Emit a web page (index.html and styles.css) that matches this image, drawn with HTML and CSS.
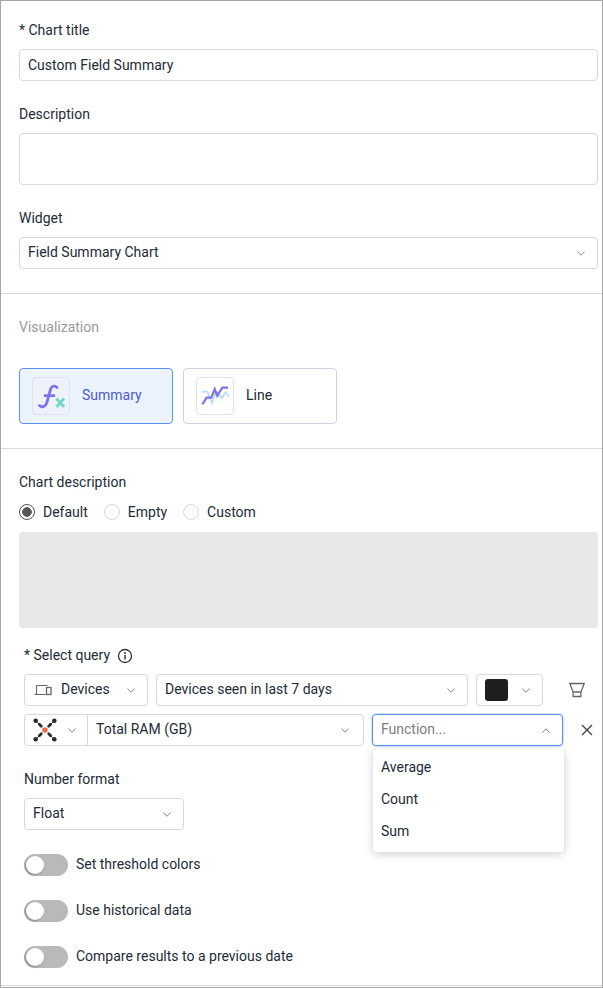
FILE: index.html
```html
<!DOCTYPE html>
<html lang="en">
<head>
    <meta charset="UTF-8">
    <meta name="viewport" content="width=device-width, initial-scale=1.0">
    <title>Chart settings</title>
    <link rel="stylesheet" href="styles.css">
</head>
<body>
    <div class="panel">
        <section class="section section-top">
            <div class="field-label">* Chart title</div>
            <div class="input">Custom Field Summary</div>
            <div class="field-label label-desc">Description</div>
            <div class="input textarea"></div>
            <div class="field-label label-widget">Widget</div>
            <div class="input select">
                <span>Field Summary Chart</span>
                <svg class="chev" viewBox="0 0 8 5"><path d="M.5.5 4 4.300 7.500.5"/></svg>
            </div>
        </section>

        <section class="section section-viz">
            <div class="viz-title">Visualization</div>
            <div class="viz-cards">
                <div class="viz-card active">
                    <div class="viz-icon">
                        <svg viewBox="0 0 36 36" width="36" height="36">
                            <path d="M24 9.500C22 7.500 18.500 7.500 17.500 11.500L14 24C13 28.500 9 30 6.500 27.500M12 17.700h9" fill="none" stroke="#8072ea" stroke-width="2.800" stroke-linecap="round"/>
                            <path d="M23.500 20.500l7.500 8.500M31 20.500l-7.500 8.500" fill="none" stroke="#74d6c6" stroke-width="2.800"/>
                        </svg>
                    </div>
                    <span>Summary</span>
                </div>
                <div class="viz-card">
                    <div class="viz-icon">
                        <svg viewBox="0 0 36 36" width="36" height="36">
                            <path d="M4.500 13.700h6L15 25l4-11 6 6 3.700-6 3.300 4.700" fill="none" stroke="#b9defb" stroke-width="1.800"/>
                            <path d="M5.300 26.300l4.400-6.600h4.600L17.700 11l2.600 6.700 5-8H31" fill="none" stroke="#8072ea" stroke-width="2.200"/>
                        </svg>
                    </div>
                    <span>Line</span>
                </div>
            </div>
        </section>

        <section class="section section-desc">
            <div class="field-label">Chart description</div>
            <div class="radios">
                <label class="radio"><i class="dot on"></i>Default</label>
                <label class="radio"><i class="dot"></i>Empty</label>
                <label class="radio"><i class="dot"></i>Custom</label>
            </div>
            <div class="desc-box"></div>

            <div class="query">
                <div class="query-label">
                    * Select query
                    <svg viewBox="0 0 16 16" width="16" height="16" class="info">
                        <circle cx="8" cy="8" r="6.500" fill="none" stroke="#333" stroke-width="1.300"/>
                        <path d="M8 7v4.500" stroke="#333" stroke-width="1.500"/>
                        <circle cx="8" cy="4.900" r="1" fill="#333"/>
                    </svg>
                </div>

                <div class="query-row">
                    <div class="input select w-devices">
                        <svg class="device" viewBox="0 0 18 12" width="18" height="12">
                            <path d="M2.500 10V1.500h11M.5 10.500h11" fill="none" stroke="#666" stroke-width="1.100"/>
                            <rect x="12.500" y="3.500" width="4.500" height="7" fill="none" stroke="#666" stroke-width="1.300"/>
                        </svg>
                        <span class="grow">Devices</span>
                        <svg class="chev" viewBox="0 0 8 5"><path d="M.5.5 4 4.300 7.500.5"/></svg>
                    </div>
                    <div class="input select w-seen">
                        <span>Devices seen in last 7 days</span>
                        <svg class="chev" viewBox="0 0 8 5"><path d="M.5.5 4 4.300 7.500.5"/></svg>
                    </div>
                    <div class="input select w-color">
                        <i class="swatch"></i>
                        <svg class="chev" viewBox="0 0 8 5"><path d="M.5.5 4 4.300 7.500.5"/></svg>
                    </div>
                    <svg class="row-btn filter" viewBox="0 0 16 16" width="16" height="16">
                        <path d="M.8 1.500h14.400L11.900 10v4.500H4.100V10zM4.100 10h7.800" fill="none" stroke="#666" stroke-width="1.300"/>
                    </svg>
                </div>

                <div class="query-row">
                    <div class="input field-combo">
                        <div class="combo-icon">
                            <svg viewBox="0 0 24 24" width="24" height="24">
                                <path d="M3 3l6 6M21 3l-6 6M3 21l6-6M21 21l-6-6" stroke="#444" stroke-width="1"/>
                                <path d="M6.300 6.300l2 2M17.700 6.300l-2 2M6.300 17.700l2-2M17.700 17.700l-2-2" stroke="#2b2b2b" stroke-width="2.800" stroke-linecap="round"/>
                                <g fill="#2b2b2b">
                                    <circle cx="2.700" cy="2.700" r="2.300"/><circle cx="21.300" cy="2.700" r="2.300"/>
                                    <circle cx="2.700" cy="21.300" r="2.300"/><circle cx="21.300" cy="21.300" r="2.300"/>
                                </g>
                                <circle cx="12" cy="12" r="3.200" fill="#fff"/>
                                <circle cx="12" cy="12" r="2.700" fill="#f0683f"/>
                            </svg>
                            <svg class="chev" viewBox="0 0 8 5"><path d="M.5.5 4 4.300 7.500.5"/></svg>
                        </div>
                        <div class="combo-value">
                            <span>Total RAM (GB)</span>
                            <svg class="chev" viewBox="0 0 8 5"><path d="M.5.5 4 4.300 7.500.5"/></svg>
                        </div>
                    </div>
                    <div class="func">
                        <div class="input select focused">
                            <span class="placeholder">Function...</span>
                            <svg class="chev" viewBox="0 0 8 5"><path d="M.5 4.500 4 .7l3.500 3.800"/></svg>
                        </div>
                        <ul class="menu">
                            <li>Average</li>
                            <li>Count</li>
                            <li>Sum</li>
                        </ul>
                    </div>
                    <svg class="row-btn close" viewBox="0 0 12 12" width="12" height="12">
                        <path d="M1 1l10 10M11 1 1 11" stroke="#444" stroke-width="1.400"/>
                    </svg>
                </div>

                <div class="field-label label-number">Number format</div>
                <div class="input select w-float">
                    <span>Float</span>
                    <svg class="chev" viewBox="0 0 8 5"><path d="M.5.5 4 4.300 7.500.5"/></svg>
                </div>

                <div class="toggles">
                    <div class="toggle-row"><i class="toggle"></i><span>Set threshold colors</span></div>
                    <div class="toggle-row"><i class="toggle"></i><span>Use historical data</span></div>
                    <div class="toggle-row"><i class="toggle"></i><span>Compare results to a previous date</span></div>
                </div>
            </div>
        </section>
    </div>
</body>
</html>
```

FILE: styles.css
```css
* {
    box-sizing: border-box;
}
body {
    margin: 0;
    font-family: Roboto, Arial, sans-serif;
    font-size: 14px;
    line-height: 20px;
    color: #222b38;
    background: #fff;
}
.panel {
    width: 603px;
    height: 988px;
    border: 1px solid #a6a6a6;
    overflow: hidden;
}
.section {
    padding-left: 18px;
    padding-right: 4px;
    border-bottom: 1px solid #d9d9d9;
}
.section-top {
    padding-top: 19px;
    height: 293px;
}
.section-viz {
    height: 155px;
    padding-top: 23px;
}
.section-desc {
    height: 537px;
    padding-top: 23px;
}
.field-label {
    height: 20px;
    margin-bottom: 9px;
}
.label-desc {
    margin-top: 23px;
}
.label-widget {
    margin-top: 23px;
}
.input {
    height: 32px;
    border: 1px solid #d9d9d9;
    border-radius: 4px;
    padding: 5px 8px;
    background: #fff;
}
.textarea {
    height: 52px;
}
.select {
    display: flex;
    align-items: center;
    justify-content: space-between;
}
.select > span,
.combo-value > span,
.viz-card > span,
.toggle-row > span {
    margin-top: -2px;
}
.chev {
    width: 8px;
    height: 5px;
    flex: none;
    margin-right: 4px;
    fill: none;
    stroke: #888;
    stroke-width: 1;
}
.viz-title {
    color: #9a9a9a;
    height: 20px;
}
.viz-cards {
    display: flex;
    gap: 10px;
    margin-top: 31px;
}
.viz-card {
    width: 154px;
    height: 56px;
    border: 1px solid #d0cfe3;
    border-radius: 4px;
    padding: 8px 12px;
    display: flex;
    align-items: center;
    gap: 12px;
}
.viz-card.active {
    background: #ebf3fe;
    border-color: #5b93f0;
    color: #4a5bd0;
}
.viz-icon {
    width: 38px;
    height: 38px;
    border: 1px solid #dfe3ee;
    border-radius: 4px;
    background: #fff;
}
.viz-card.active .viz-icon {
    background: #eef3fb;
}
.viz-icon svg {
    display: block;
}
.section-desc > .field-label {
    margin-bottom: 10px;
}
.radios {
    display: flex;
    gap: 16px;
    height: 20px;
}
.radio {
    display: flex;
    align-items: center;
    gap: 8px;
}
.dot {
    width: 16px;
    height: 16px;
    border: 1px solid #d9d9d9;
    border-radius: 50%;
    background: #fff;
}
.dot.on {
    border-color: #555;
    background: radial-gradient(circle, #555 0 4.500px, #fff 5px);
}
.desc-box {
    height: 96px;
    margin-top: 10px;
    background: #e8e8e8;
    border-radius: 4px;
}
.query {
    padding-left: 5px;
}
.query-label {
    display: flex;
    align-items: center;
    gap: 7px;
    margin-top: 17px;
    height: 20px;
}
.info {
    flex: none;
    margin-top: 2px;
}
.query-row {
    display: flex;
    gap: 8px;
    margin-top: 8px;
    align-items: center;
}
.query-label + .query-row {
    margin-top: 9px;
}
.w-devices {
    width: 124px;
    gap: 9px;
    padding-left: 9px;
}
.grow {
    flex: 1;
}
.w-seen {
    width: 312px;
}
.w-color {
    width: 67px;
}
.swatch {
    width: 23px;
    height: 22px;
    background: #1f1f1f;
    border-radius: 3px;
}
.row-btn {
    flex: none;
}
.filter {
    margin-left: 18px;
}
.close {
    margin-left: 10px;
}
.field-combo {
    width: 340px;
    padding: 0;
    display: flex;
}
.combo-icon {
    width: 63px;
    border-right: 1px solid #d9d9d9;
    display: flex;
    align-items: center;
    gap: 11px;
    padding-left: 8px;
}
.combo-value {
    flex: 1;
    display: flex;
    align-items: center;
    justify-content: space-between;
    padding: 0 10px 0 8px;
}
.func {
    position: relative;
    width: 191px;
}
.focused {
    border-color: #5b93f0;
    box-shadow: 0 0 0 1px #d4e3fb;
}
.placeholder {
    color: #7d7d7d;
}
.menu {
    position: absolute;
    top: 35px;
    left: 1px;
    width: 191px;
    height: 103px;
    margin: 0;
    padding: 2px 0;
    list-style: none;
    background: #fff;
    border-radius: 4px;
    box-shadow: 0 2px 8px rgba(60, 60, 90, 0.25);
}
.menu li {
    height: 32px;
    padding: 6px 8px;
}
.label-number {
    margin-top: 23px;
}
.w-float {
    width: 160px;
}
.toggles {
    margin-top: 24px;
    display: flex;
    flex-direction: column;
    gap: 24px;
}
.toggle-row {
    display: flex;
    align-items: center;
    gap: 8px;
    height: 22px;
}
.toggle {
    width: 44px;
    height: 22px;
    background: #b9b9b9;
    border-radius: 11px;
    position: relative;
}
.toggle::after {
    content: "";
    position: absolute;
    left: 2px;
    top: 2px;
    width: 18px;
    height: 18px;
    border-radius: 50%;
    background: #fff;
    box-shadow: -1px 1px 2px rgba(0, 0, 0, 0.3);
}
```
